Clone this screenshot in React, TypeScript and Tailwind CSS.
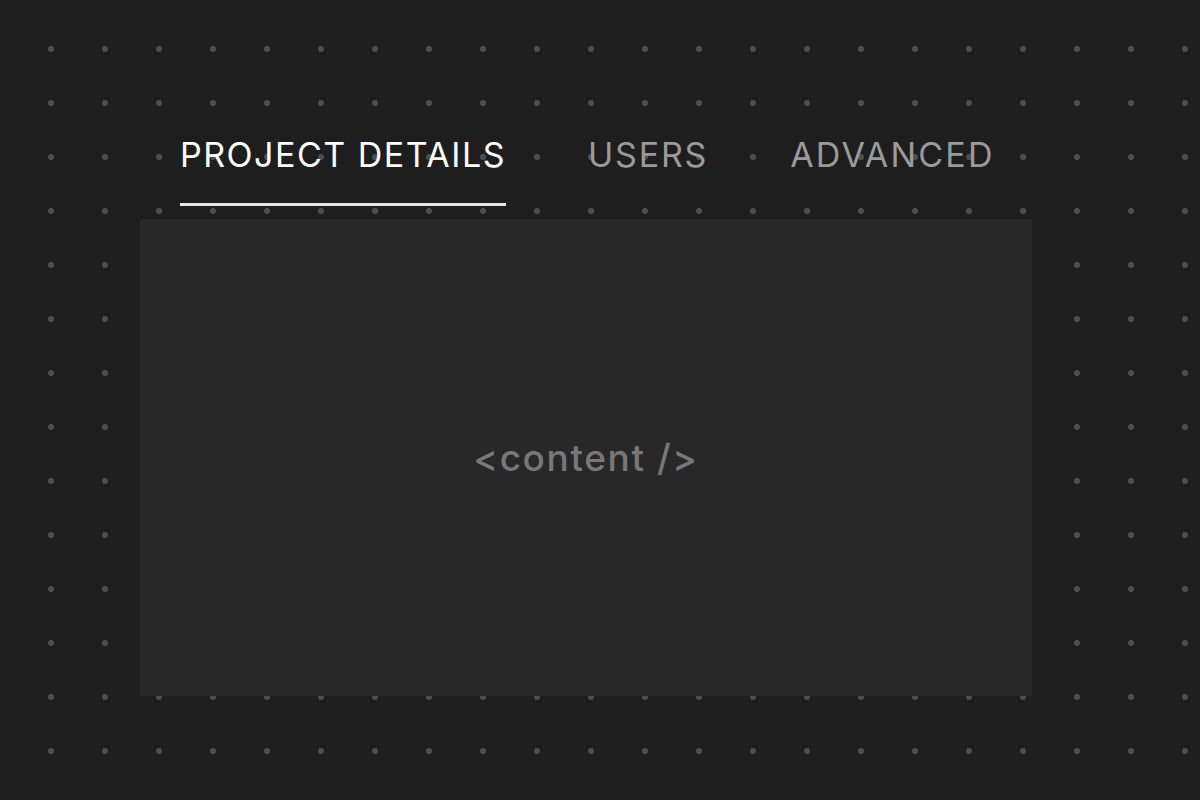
import React from "react";

export default function App() {
  const tabs = ["PROJECT DETAILS", "USERS", "ADVANCED"];
  return (
    <div
      className="w-[1200px] h-[800px] bg-[#1e1e1e] overflow-hidden pl-[140px] pt-[134px]"
      style={{
        backgroundImage: "radial-gradient(circle, #4d4d4d 2.7px, transparent 3.4px)",
        backgroundSize: "54px 54px",
        backgroundPosition: "24px 22px",
        fontFamily: "Inter, 'Noto Sans', sans-serif",
      }}
    >
      <div className="flex gap-[82px] pl-[40px]">
        {tabs.map((t, i) => (
          <div
            key={t}
            className={
              i === 0
                ? "text-[34px] leading-[41px] tracking-[1.5px] text-white pb-[28px] border-b-[3px] border-[#e6e6e6]"
                : i === 1
                ? "text-[34px] leading-[41px] tracking-[1.8px] text-[#9a9a9a] pb-[28px] border-b-[3px] border-transparent"
                : "text-[34px] leading-[41px] tracking-[2.2px] text-[#9a9a9a] pb-[28px] border-b-[3px] border-transparent"
            }
          >
            {t}
          </div>
        ))}
      </div>
      <div className="mt-[13px] w-[892px] h-[477px] bg-[#282828] flex items-center justify-center">
        <span className="text-[37px] font-medium tracking-[1.6px] text-[#787878]">&lt;content /&gt;</span>
      </div>
    </div>
  );
}
